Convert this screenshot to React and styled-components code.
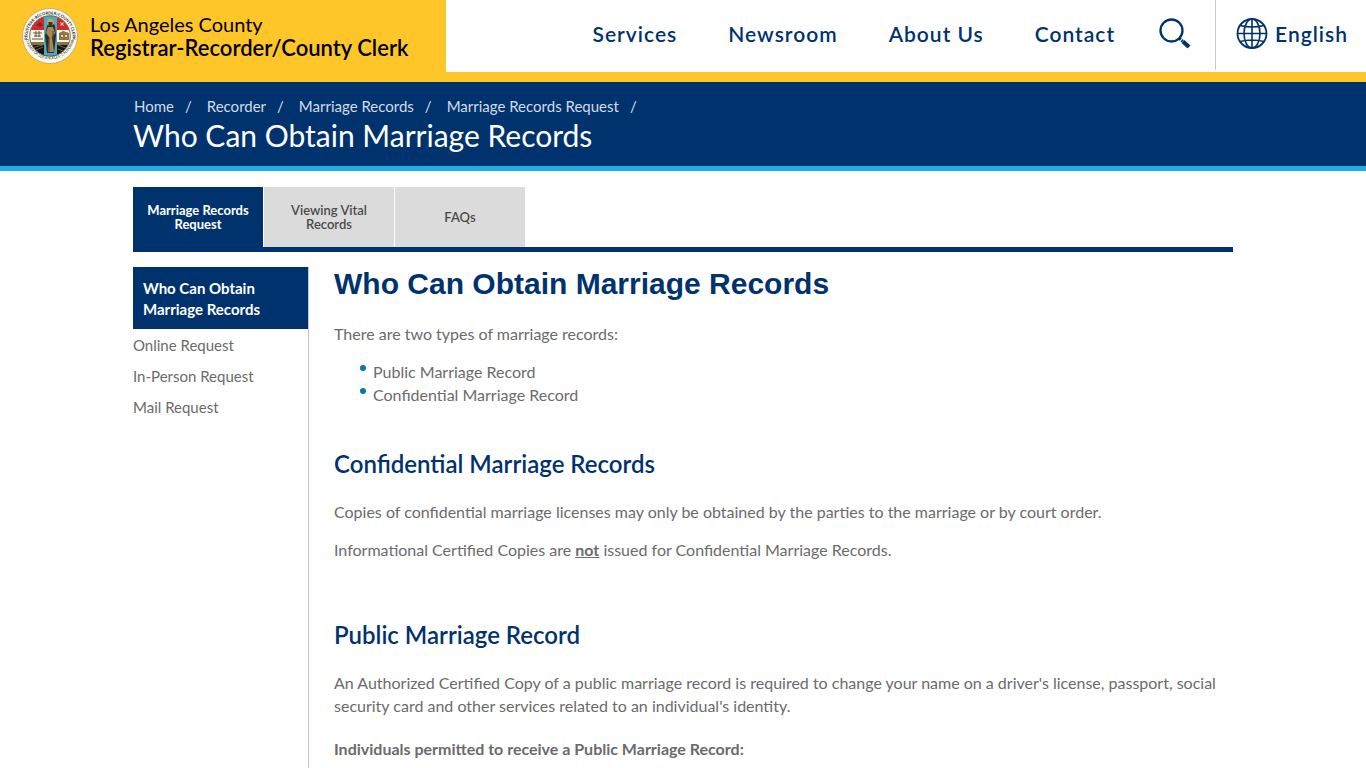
import React from 'react';
import styled, { createGlobalStyle } from 'styled-components';

const GlobalStyle = createGlobalStyle`
  * {
    box-sizing: border-box;
  }

  body {
    margin: 0;
    background: #fff;
    color: #6b6b6b;
    font-family: Lato, 'Liberation Sans', sans-serif;
    font-size: 16px;
    line-height: 23px;
  }

  a {
    color: inherit;
    text-decoration: none;
  }

  ul,
  ol {
    list-style: none;
    margin: 0;
    padding: 0;
  }

  h1,
  h2,
  p {
    margin: 0;
  }
`;

const HeaderStyle = styled.header`
  display: flex;
  justify-content: space-between;
  background: #fff;
  border-bottom: 10px solid #ffc629;

  .brand {
    display: flex;
    align-items: flex-start;
    gap: 12px;
    width: 446px;
    height: 72px;
    padding: 8px 0 0 22px;
    background: #ffc629;
    color: #000;
  }

  .brand-text {
    display: flex;
    flex-direction: column;
    padding-top: 5px;
    font-size: 20px;
    line-height: 23px;
  }

  .brand-text strong {
    font-size: 22px;
    font-weight: 600;
  }
`;

const NavStyle = styled.nav`
  display: flex;
  align-items: flex-start;
  color: #00336e;
  font-size: 21px;
  font-weight: 600;
  letter-spacing: 1px;

  ul {
    display: flex;
    gap: 51px;
    margin-right: 44px;
  }

  li a {
    display: block;
    line-height: 68px;
  }
`;

const IconButton = styled.button`
  display: flex;
  align-items: center;
  gap: 7px;
  height: 70px;
  padding: 0 ${({ $end }) => $end}px 4px ${({ $start }) => $start}px;
  border: 0;
  border-left: ${({ $divided }) => ($divided ? '1px solid #c8c8c8' : '0')};
  background: none;
  color: inherit;
  font: inherit;
  letter-spacing: inherit;
  cursor: pointer;
`;

const Container = styled.div`
  max-width: 1100px;
  margin: 0 auto;
`;

const BannerStyle = styled.section`
  height: 89px;
  padding-top: 14px;
  background: #00336e;
  border-bottom: 5px solid #1eaee5;
  color: #fff;

  ol {
    display: flex;
    padding-left: 1px;
    color: #d3dbe5;
    font-size: 15px;
    line-height: 21px;
  }

  li::after {
    content: '/';
    margin: 0 15px 0 11px;
  }

  .title {
    font-size: 30px;
    line-height: 36px;
  }
`;

const TabList = styled.nav`
  display: flex;
  gap: 1px;
  margin-top: 16px;
  border-bottom: 5px solid #00336e;
`;

const Tab = styled.a`
  display: flex;
  align-items: center;
  justify-content: center;
  width: 130px;
  height: 60px;
  padding: 0 12px;
  background: ${({ $active }) => ($active ? '#00336e' : '#dbdbdb')};
  && {
    color: ${({ $active }) => ($active ? '#fff' : '#4a4a4a')};
  }
  font-size: 13px;
  font-weight: ${({ $active }) => ($active ? 700 : 600)};
  line-height: 14px;
  text-align: center;
`;

const PageBody = styled.div`
  display: flex;
  align-items: stretch;
  margin-top: 15px;
`;

const SideNav = styled.nav`
  flex: 0 0 176px;
  border-right: 1px solid #c4c4c4;
  font-size: 15px;
  line-height: 21px;
`;

const SideLink = styled.a`
  display: block;
  padding: ${({ $active }) => ($active ? '11px 10px 9px' : '6px 0 4px')};
  background: ${({ $active }) => ($active ? '#00336e' : 'none')};
  && {
    color: ${({ $active }) => ($active ? '#fff' : 'inherit')};
  }
  font-weight: ${({ $active }) => ($active ? 700 : 400)};
`;

const Article = styled.main`
  flex: 1;
  padding-left: 25px;

  h1 {
    color: #00336e;
    font-family: 'Liberation Sans', Arial, sans-serif;
    font-size: 30px;
    line-height: 34px;
  }

  h2 {
    margin: 41px 0 19px;
    color: #00336e;
    font-size: 24px;
    font-weight: 600;
    line-height: 34px;
  }

  p {
    margin-bottom: 15px;
  }

  h1 + p {
    margin-top: 21px;
  }

  p + h2 {
    margin-top: 57px;
  }

  .lead-in {
    margin-top: 20px;
  }
`;

const BulletList = styled.ul`
  padding-left: 26px;

  li {
    display: flex;
    gap: 7px;
  }

  li::before {
    content: '';
    width: 6px;
    height: 6px;
    margin-top: 5px;
    border-radius: 50%;
    background: #0a74b5;
  }
`;

function Seal() {
  return (
    <svg width="56" height="56" viewBox="0 0 56 56" aria-hidden="true">
      <defs>
        <clipPath id="seal-core">
          <circle cx="28" cy="28" r="20" />
        </clipPath>
        <path id="seal-top" d="M5.6 32a22.6 22.6 0 1 1 44.8 0" />
        <path id="seal-bottom" d="M4 32a24.6 24.6 0 0 0 48 0" />
      </defs>
      <circle cx="28" cy="28" r="27.5" fill="#fdfbf0" stroke="#a99a68" strokeWidth="0.7" />
      <g clipPath="url(#seal-core)">
        <path fill="#f8f4e8" d="M8 8h40v40H8z" />
        <path fill="#d5282d" d="M8 8h40v14H8z" />
        <path fill="#17140f" d="M8 35h40v13H8z" />
        <path fill="#877647" d="M8 34h40v3H8z" />
        <path fill="#46adc5" d="M22 7h13v42H22z" />
        <path fill="#7a2a24" d="M14 17l4-3 3 3-3 2z" />
        <path fill="#f4d8a6" d="M38 14l2 1 2-1-1 2 1 2-2-1-2 1 1-2z" />
        <path
          fill="none"
          stroke="#645638"
          d="M10 31h11M12 28h7M14 23v6M17 23v6M11 25h9"
        />
        <path fill="#907443" d="M37 25l4-2 6 2v7H37z" />
        <path fill="#ead6a0" d="M39 27h2v2h-2zM43 27h2v2h-2z" />
        <path
          fill="none"
          stroke="#93855b"
          strokeWidth="0.7"
          d="M9 40l12-3M12 43l9-4M36 37l10 4M36 41l7 3"
        />
        <path fill="#342b27" d="M25 18l3-5h2l3 5 1 10-2 17h-7l-2-17z" />
        <path fill="#ac8753" d="M26 19h5l2 6-3 4 2 15h-6l1-15-3-4z" />
        <circle cx="28.5" cy="14.5" r="3.4" fill="#c9a957" />
        <path fill="#40302a" d="M26.5 14h4v4h-4z" />
        <path stroke="#51412e" d="M27 29v15M31 23v8" />
      </g>
      <circle cx="28" cy="28" r="20.3" fill="none" stroke="#4a463c" strokeWidth="0.8" />
      <g fill="#25231e" fontFamily="Lato, sans-serif" fontSize="4" fontWeight="700">
        <text textAnchor="middle">
          <textPath href="#seal-top" startOffset="50%">
            REGISTRAR-RECORDER/COUNTY CLERK
          </textPath>
        </text>
        <text textAnchor="middle" fontSize="3.5" fontWeight="400">
          <textPath href="#seal-bottom" startOffset="50%">
            COUNTY OF LOS ANGELES · CALIFORNIA
          </textPath>
        </text>
      </g>
    </svg>
  );
}

function SearchIcon() {
  return (
    <svg width="32" height="32" viewBox="0 0 32 32" fill="none" stroke="currentColor" aria-hidden="true">
      <circle cx="12.5" cy="13.5" r="11" strokeWidth="2.3" />
      <path d="M20.5 21.5l3.5 3" strokeWidth="3" strokeDasharray="1.7 1" />
      <path d="M24 24.5l6 5.5" strokeWidth="4.2" />
    </svg>
  );
}

function GlobeIcon() {
  return (
    <svg width="32" height="32" viewBox="0 0 32 32" fill="none" stroke="currentColor" strokeWidth="1.6" aria-hidden="true">
      <circle cx="16" cy="16.5" r="14.5" strokeWidth="1.8" />
      <ellipse cx="16" cy="16.5" rx="8" ry="14.5" />
      <path d="M16 2v29M1.5 16.5h29M4 8.5q12 3 24 0M4 24.5q12-3 24 0" />
    </svg>
  );
}

const navItems = ['Services', 'Newsroom', 'About Us', 'Contact'];
const crumbs = ['Home', 'Recorder', 'Marriage Records', 'Marriage Records Request'];
const tabs = ['Marriage Records Request', 'Viewing Vital Records', 'FAQs'];
const sideLinks = [
  'Who Can Obtain Marriage Records',
  'Online Request',
  'In-Person Request',
  'Mail Request',
];

function Header() {
  return (
    <HeaderStyle>
      <a className="brand" href="#home">
        <Seal />
        <span className="brand-text">
          <span>Los Angeles County</span>
          <strong>Registrar-Recorder/County Clerk</strong>
        </span>
      </a>
      <NavStyle aria-label="Main">
        <ul>
          {navItems.map((item) => (
            <li key={item}>
              <a href="#nav">{item}</a>
            </li>
          ))}
        </ul>
        <IconButton type="button" aria-label="Search" $start={0} $end={24}>
          <SearchIcon />
        </IconButton>
        <IconButton type="button" $divided $start={20} $end={18}>
          <GlobeIcon />
          English
        </IconButton>
      </NavStyle>
    </HeaderStyle>
  );
}

function Banner() {
  return (
    <BannerStyle>
      <Container>
        <ol aria-label="Breadcrumb">
          {crumbs.map((crumb) => (
            <li key={crumb}>
              <a href="#crumb">{crumb}</a>
            </li>
          ))}
        </ol>
        <p className="title">Who Can Obtain Marriage Records</p>
      </Container>
    </BannerStyle>
  );
}

export default function App() {
  return (
    <>
      <GlobalStyle />
      <Header />
      <Banner />
      <Container>
        <TabList aria-label="Sections">
          {tabs.map((tab, i) => (
            <Tab key={tab} href="#tab" $active={i === 0}>
              {tab}
            </Tab>
          ))}
        </TabList>
        <PageBody>
          <SideNav aria-label="Marriage records">
            {sideLinks.map((link, i) => (
              <SideLink key={link} href="#side" $active={i === 0}>
                {link}
              </SideLink>
            ))}
          </SideNav>
          <Article>
            <h1>Who Can Obtain Marriage Records</h1>
            <p>There are two types of marriage records:</p>
            <BulletList>
              <li>Public Marriage Record</li>
              <li>Confidential Marriage Record</li>
            </BulletList>
            <h2>Confidential Marriage Records</h2>
            <p>
              Copies of confidential marriage licenses may only be obtained by
              the parties to the marriage or by court order.
            </p>
            <p>
              Informational Certified Copies are{' '}
              <strong>
                <u>not</u>
              </strong>{' '}
              issued for Confidential Marriage Records.
            </p>
            <h2>Public Marriage Record</h2>
            <p>
              An Authorized Certified Copy of a public marriage record is
              required to change your name on a driver's license, passport,
              social security card and other services related to an
              individual's identity.
            </p>
            <p className="lead-in">
              <strong>
                Individuals permitted to receive a Public Marriage Record:
              </strong>
            </p>
          </Article>
        </PageBody>
      </Container>
    </>
  );
}
